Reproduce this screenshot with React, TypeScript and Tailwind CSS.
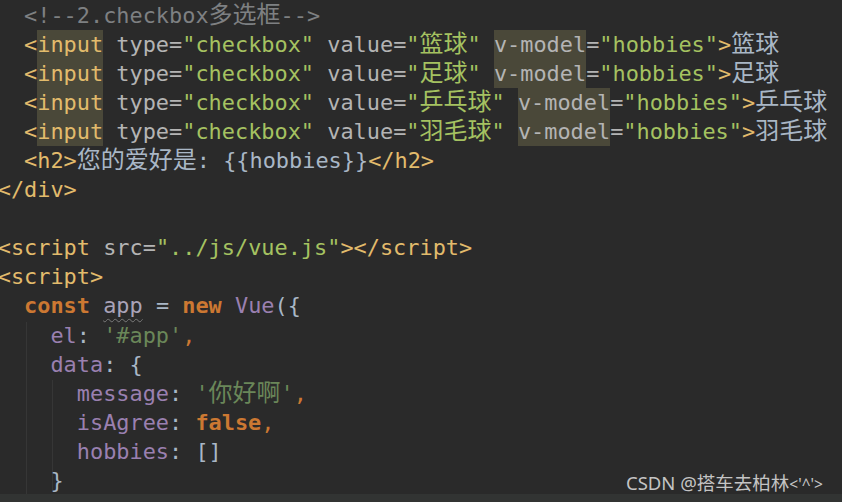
import React from "react";

type Seg = { t: string; c: string; b?: boolean; hl?: boolean; wavy?: boolean };

const Y = "text-[#e2bb6c]"; // tag
const G = "text-[#b4b4b4]"; // attr name
const V = "text-[#a5c261]"; // attr value
const T = "text-[#a9b7c6]"; // text
const O = "text-[#cc7832]"; // keyword
const P = "text-[#9a80b0]"; // purple
const S = "text-[#6a8759]"; // js string
const C = "text-[#7e8082]"; // comment

const isCJK = (ch: string) => /[\u3000-\u9fff\uff00-\uffef]/.test(ch);

function Text({ t }: { t: string }) {
  const parts: { s: string; cjk: boolean }[] = [];
  for (const ch of t) {
    const cjk = isCJK(ch);
    const last = parts[parts.length - 1];
    if (last && last.cjk === cjk) last.s += ch;
    else parts.push({ s: ch, cjk });
  }
  return (
    <>
      {parts.map((p, i) =>
        p.cjk ? (
          <span
            key={i}
            className="text-[24px] leading-none font-['Noto_Sans_CJK_SC',sans-serif] font-normal"
          >
            {p.s}
          </span>
        ) : (
          <span key={i}>{p.s}</span>
        )
      )}
    </>
  );
}

const lines: Seg[][] = [
  [{ t: "  <!--2.checkbox多选框-->", c: C }],
  ...["篮球", "足球", "乒乓球", "羽毛球"].map((h) => [
    { t: "  <", c: Y },
    { t: "input", c: Y, hl: true },
    { t: " type", c: G },
    { t: "=", c: G },
    { t: '"checkbox"', c: V },
    { t: " value", c: G },
    { t: "=", c: G },
    { t: '"' + h + '"', c: V },
    { t: " ", c: G },
    { t: "v-model", c: G, hl: true },
    { t: "=", c: G },
    { t: '"hobbies"', c: V },
    { t: ">", c: Y },
    { t: h, c: T },
  ]),
  [
    { t: "  <h2>", c: Y },
    { t: "您的爱好是: {{hobbies}}", c: T },
    { t: "</h2>", c: Y },
  ],
  [{ t: "</div>", c: Y }],
  [{ t: " ", c: T }],
  [
    { t: "<script", c: Y },
    { t: " src", c: G },
    { t: "=", c: G },
    { t: '"../js/vue.js"', c: V },
    { t: "></script>", c: Y },
  ],
  [{ t: "<script>", c: Y }],
  [
    { t: "  ", c: T },
    { t: "const", c: O, b: true },
    { t: " ", c: T },
    { t: "app", c: "text-[#a9a3b8]", wavy: true },
    { t: " = ", c: T },
    { t: "new", c: O, b: true },
    { t: " ", c: T },
    { t: "Vue", c: P },
    { t: "({", c: T },
  ],
  [
    { t: "    el", c: P },
    { t: ": ", c: T },
    { t: "'#app'", c: S },
    { t: ",", c: O },
  ],
  [
    { t: "    data", c: P },
    { t: ": {", c: T },
  ],
  [
    { t: "      message", c: P },
    { t: ": ", c: T },
    { t: "'你好啊'", c: S },
    { t: ",", c: O },
  ],
  [
    { t: "      isAgree", c: P },
    { t: ": ", c: T },
    { t: "false", c: O, b: true },
    { t: ",", c: O },
  ],
  [
    { t: "      hobbies", c: P },
    { t: ": []", c: T },
  ],
  [{ t: "    }", c: T }],
];

export default function App() {
  return (
    <div className="relative w-[842px] h-[502px] overflow-hidden bg-[#2a2a2a]">
      <div className="absolute left-[26px] top-[322px] h-[180px] w-px bg-[#363636]" />
      <div className="absolute left-[52px] top-[380px] h-[112px] w-px bg-[#363636]" />
      <div className="relative flex flex-col ml-[-2.3px] pt-[0.5px] font-['DejaVu_Sans_Mono',monospace] text-[21.9px]">
        {lines.map((segs, i) => (
          <div key={i} className="h-[29.1px] leading-[29.1px] whitespace-pre">
            {segs.map((s, j) => (
              <span
                key={j}
                className={
                  s.c +
                  (s.b ? " font-bold" : "") +
                  (s.hl ? " inline-block h-[29.1px] bg-[#4a4839]" : "") +
                  (s.wavy
                    ? " underline decoration-wavy decoration-[#7a7a7a] decoration-1 underline-offset-[5px]"
                    : "")
                }
              >
                <Text t={s.t} />
              </span>
            ))}
          </div>
        ))}
      </div>
      <div className="absolute left-0 right-0 bottom-0 h-[8px] bg-[#323433]" />
      <div className="absolute left-[626px] top-[470px] text-[18.5px] leading-[26px] text-[#c4c4c4] font-['Noto_Sans','Noto_Sans_CJK_SC',sans-serif] whitespace-pre">
        CSDN @搭车去柏林<span className="text-[15.5px]">{"<'^'>"}</span>
      </div>
    </div>
  );
}
